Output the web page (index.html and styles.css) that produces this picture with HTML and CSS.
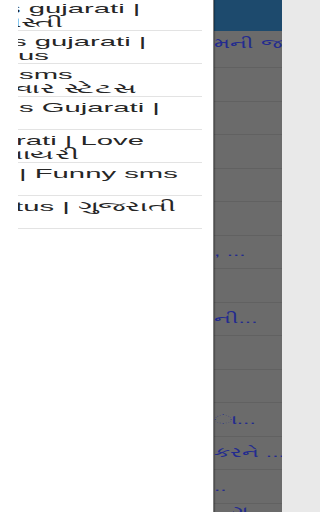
FILE: index.html
```html
<!DOCTYPE html>
<html lang="gu">
<head>
<meta charset="utf-8">
<title>Gujarati SMS</title>
<link rel="stylesheet" href="styles.css">
</head>
<body>
<div class="screen">
  <div class="app">
    <div class="main">
      <div class="bar"></div>
      <div class="rows">
        <div class="row first"><span class="bt">મની જાણ</span></div>
        <div class="row"></div>
        <div class="row"></div>
        <div class="row"></div>
        <div class="row"></div>
        <div class="row"></div>
        <div class="row"><span class="bt">, ...</span></div>
        <div class="row"></div>
        <div class="row"><span class="bt">ની...</span></div>
        <div class="row"></div>
        <div class="row"></div>
        <div class="row"><span class="bt">ા...</span></div>
        <div class="row"><span class="bt">કરને ...</span></div>
        <div class="row"><span class="bt">..</span></div>
        <div class="row last"><span class="bt shift">ગ</span></div>
      </div>
    </div>
    <div class="edge"></div>
  </div>

  <nav class="drawer">
    <div class="list">
      <div class="item">
        <div class="ln"><span class="o-12">s gujarati |</span></div>
        <div class="ln"><span class="o-17">મસ્તી</span></div>
      </div>
      <div class="item">
        <div class="ln"><span class="o-6">s gujarati |</span></div>
        <div class="ln"><span>us</span></div>
      </div>
      <div class="item">
        <div class="ln"><span class="o1">sms</span></div>
        <div class="ln"><span class="o-3">વાર સ્ટેટસ</span></div>
      </div>
      <div class="item">
        <div class="ln"><span class="o1">s Gujarati |</span></div>
        <div class="ln"><span>&nbsp;</span></div>
      </div>
      <div class="item">
        <div class="ln"><span class="o-2">rati | Love</span></div>
        <div class="ln"><span class="o-17">શાયરી</span></div>
      </div>
      <div class="item">
        <div class="ln"><span class="o1">| Funny sms</span></div>
        <div class="ln"><span>&nbsp;</span></div>
      </div>
      <div class="item">
        <div class="ln"><span class="o-3">tus | ગુજરાતી</span></div>
        <div class="ln"><span>&nbsp;</span></div>
      </div>
    </div>
  </nav>
</div>
</body>
</html>
```

FILE: styles.css
```css
html, body {
  margin: 0;
  padding: 0;
  background: #e9e9e9;
}

.screen {
  position: relative;
  width: 288px;
  height: 512px;
  overflow: hidden;
  font-family: "Liberation Sans", Arial, "Noto Sans", sans-serif;
}

.app {
  display: flex;
  height: 100%;
}

.main {
  width: 282px;
  background: #6b6b6b;
  overflow: hidden;
}

.edge {
  flex: 1;
  background: #e9e9e9;
}

.bar {
  height: 31px;
  background: #1d4a6d;
}

.row {
  height: 33.5px;
  box-sizing: border-box;
  border-bottom: 1px solid #616161;
  display: flex;
  align-items: center;
  white-space: nowrap;
}

.row.first {
  height: 37px;
  align-items: flex-start;
  padding-top: 5px;
}

.row.last {
  align-items: flex-start;
  padding-top: 0;
}

.bt {
  display: inline-block;
  margin-left: 214px;
  font-size: 13px;
  line-height: 15px;
  color: #232b8f;
  transform: scaleX(1.75);
  transform-origin: left center;
}

.bt.shift {
  margin-left: 232px;
}

/* drawer */
.drawer {
  position: absolute;
  left: 0;
  top: 0;
  width: 213px;
  height: 100%;
  background: #ffffff;
  border-right: 1px solid #7d7d7d;
  box-shadow: 1px 0 1px rgba(0, 0, 0, 0.25);
}

.list {
  margin: -2px 0 0 18px;
  width: 184px;
  overflow: hidden;
}

.item {
  height: 33px;
  box-sizing: border-box;
  padding-top: 3.5px;
  border-bottom: 1px solid #e3e3e3;
}

.ln {
  height: 14px;
  line-height: 14px;
  font-size: 13px;
  color: #262626;
  white-space: nowrap;
}

.ln span {
  display: inline-block;
  transform: scaleX(2.25);
  transform-origin: left center;
}

.ln .o-17 { margin-left: -17px; }
.ln .o-12 { margin-left: -12px; }
.ln .o-6 { margin-left: -6px; }
.ln .o-3 { margin-left: -3px; }
.ln .o-2 { margin-left: -2px; }
.ln .o1 { margin-left: 1px; }
```
